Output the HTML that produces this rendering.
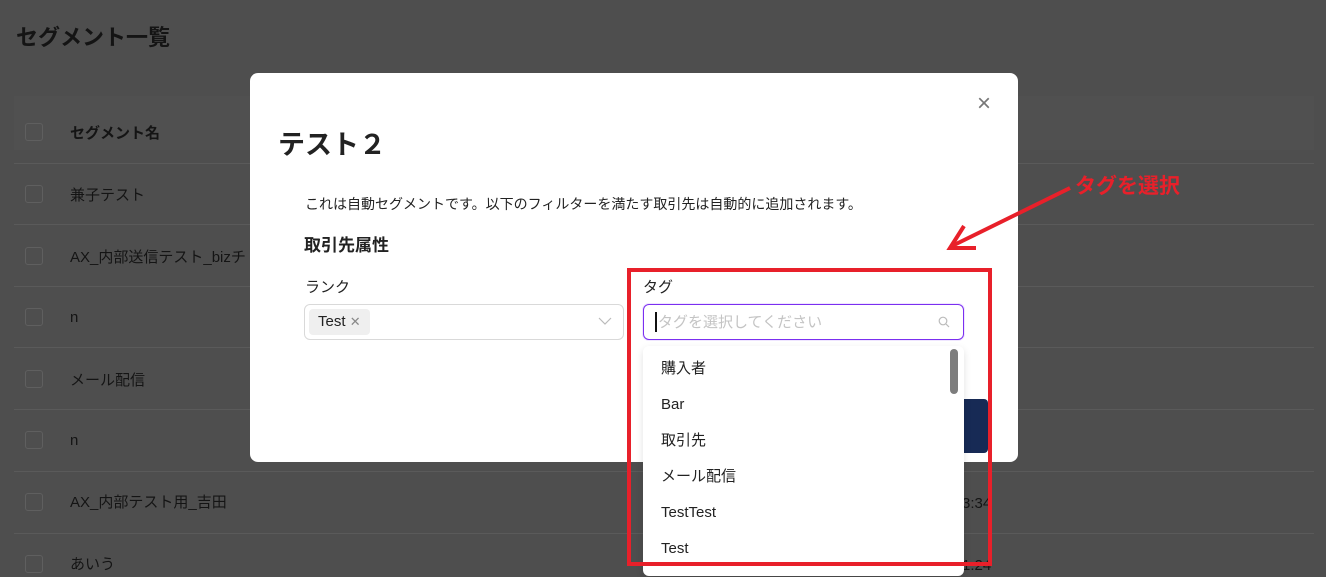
<!DOCTYPE html>
<html><head><meta charset="utf-8"><style>
*{margin:0;padding:0;box-sizing:border-box}
body{width:1326px;height:571px;overflow:hidden;background:#4e4e4e;font-family:"Liberation Sans","Noto Sans CJK JP",sans-serif;position:relative;color:#1d1d1d}
.a{position:absolute;line-height:22px;white-space:nowrap}
.title{left:16px;top:27px;font-size:22px;font-weight:bold;color:#141414}
.hdr{left:14px;top:96px;width:1300px;height:54px;background:#505050}
.row{left:14px;width:1300px;height:1px;background:#5a5a5a}
.cb{left:25px;width:18px;height:18px;border:1px solid #5f5f5f;border-radius:3px}
.cell{left:70px;font-size:15px;color:#141414}
.modal{left:250px;top:73px;width:768px;height:389px;background:#fff;border-radius:8px}
.inp{border:1px solid #d9d9d9;border-radius:6px;background:#fff}
.opt{left:661px;font-size:15px;color:#222}
</style></head><body>
<div class="a title">セグメント一覧</div>
<div class="a hdr"></div>
<div class="a cb" style="top:123px"></div><div class="a cell" style="top:123px;font-weight:bold">セグメント名</div>
<div class="a row" style="top:163px"></div>
<div class="a cb" style="top:185px"></div><div class="a cell" style="top:185px">兼子テスト</div>
<div class="a row" style="top:224px"></div>
<div class="a cb" style="top:247px"></div><div class="a cell" style="top:247px">AX_内部送信テスト_bizチ</div>
<div class="a row" style="top:286px"></div>
<div class="a cb" style="top:308px"></div><div class="a cell" style="top:307px">n</div>
<div class="a row" style="top:347px"></div>
<div class="a cb" style="top:370px"></div><div class="a cell" style="top:370px">メール配信</div>
<div class="a row" style="top:409px"></div>
<div class="a cb" style="top:431px"></div><div class="a cell" style="top:430px">n</div>
<div class="a row" style="top:471px"></div>
<div class="a cb" style="top:493px"></div><div class="a cell" style="top:492px">AX_内部テスト用_吉田</div>
<div class="a row" style="top:533px"></div>
<div class="a cb" style="top:555px"></div><div class="a cell" style="top:554px">あいう</div>
<div class="a" style="left:962px;top:493px;font-size:15px;color:#141414">3:34</div>
<div class="a" style="left:962px;top:555px;font-size:15px;color:#141414">1:24</div>

<div class="a modal"></div>
<div class="a" style="left:977px;top:94px;font-size:24px;color:#777;line-height:20px">×</div>
<div class="a" style="left:278px;top:129px;font-size:27px;line-height:32px;font-weight:bold;color:#222">テスト２</div>
<div class="a" style="left:305px;top:193px;font-size:14px;color:#222">これは自動セグメントです。以下のフィルターを満たす取引先は自動的に追加されます。</div>
<div class="a" style="left:304px;top:235px;font-size:17px;font-weight:bold;color:#222">取引先属性</div>
<div class="a" style="left:305px;top:277px;font-size:15px;color:#222">ランク</div>
<div class="a inp" style="left:304px;top:304px;width:320px;height:36px"></div>
<div class="a" style="left:309px;top:309px;width:61px;height:26px;background:#efefef;border-radius:4px;font-size:15px;line-height:26px;padding-left:9px;color:#222">Test <span style="font-size:13px;color:#888">✕</span></div>
<svg class="a" style="left:598px;top:316px" width="14" height="10"><path d="M1 2 L7 8 L13 2" stroke="#bbb" fill="none" stroke-width="1.2"/></svg>
<div class="a" style="left:643px;top:277px;font-size:15px;color:#222">タグ</div>
<div class="a inp" style="left:643px;top:304px;width:321px;height:36px;border-color:#7b2ff0;box-shadow:0 0 0 1px #efe6ff"></div>
<div class="a" style="left:655px;top:312px;width:2px;height:20px;background:#111"></div>
<div class="a" style="left:658px;top:312px;font-size:15px;color:#c4c4c4">タグを選択してください</div>
<svg class="a" style="left:938px;top:316px" width="12" height="12"><circle cx="5" cy="5" r="3.8" stroke="#bbb" fill="none" stroke-width="1.2"/><path d="M8 8 L11 11" stroke="#bbb" stroke-width="1.2"/></svg>
<div class="a" style="left:958px;top:399px;width:30px;height:54px;background:#172a55;border-radius:4px"></div>
<div class="a" style="left:643px;top:346px;width:321px;height:230px;background:#fff;border-radius:6px;box-shadow:0 3px 8px rgba(0,0,0,.12)"></div>
<div class="a" style="left:950px;top:349px;width:8px;height:45px;background:#7d7d7d;border-radius:4px"></div>
<div class="a opt" style="top:358px">購入者</div>
<div class="a opt" style="top:394px">Bar</div>
<div class="a opt" style="top:430px">取引先</div>
<div class="a opt" style="top:466px">メール配信</div>
<div class="a opt" style="top:502px">TestTest</div>
<div class="a opt" style="top:538px">Test</div>
<div class="a" style="left:627px;top:268px;width:365px;height:298px;border:4px solid #e8202a"></div>
<svg class="a" style="left:940px;top:180px" width="140" height="80"><path d="M130 8 L12 66" stroke="#e8202a" stroke-width="4" fill="none"/><path d="M24 46 L10 68 L36 68" stroke="#e8202a" stroke-width="4" fill="none"/></svg>
<div class="a" style="left:1075px;top:174px;font-size:21px;line-height:26px;font-weight:bold;color:#e8202a">タグを選択</div>
</body></html>
